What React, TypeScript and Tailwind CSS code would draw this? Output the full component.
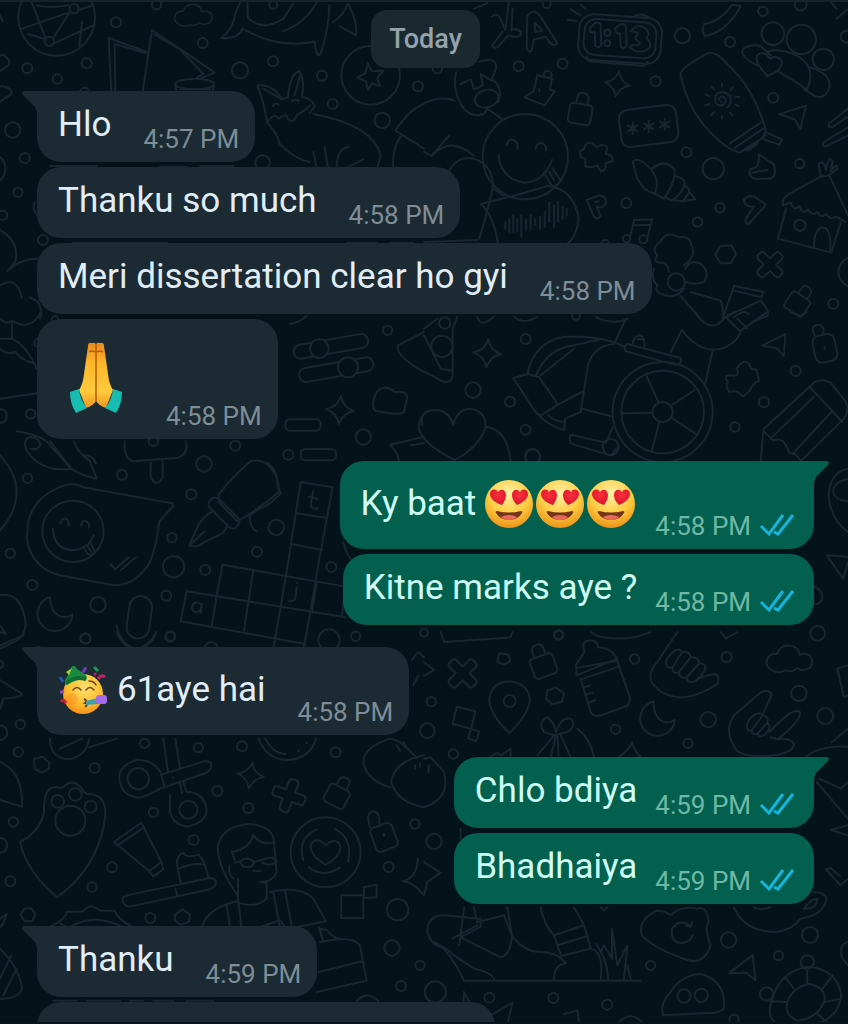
import React from 'react';

type Dot = [number, number, number];

interface PlacedProps {
  x: number;
  y: number;
  turn?: number;
  size?: number;
}

const place = ({ x, y, turn = 0, size = 1 }: PlacedProps) =>
  `translate(${x} ${y}) rotate(${turn}) scale(${size})`;

const Dots: React.FC<{ dots: Dot[] }> = ({ dots }) => (
  <>
    {dots.map(([x, y, r]) => (
      <circle key={`${x}-${y}`} cx={x} cy={y} r={r} />
    ))}
  </>
);

const Sparkle: React.FC<PlacedProps> = (props) => (
  <path transform={place(props)} d="M0-42Q7-10 42 0Q10 8 0 42Q-8 10-42 0Q-8-8 0-42Z" />
);

const Cross: React.FC<PlacedProps> = (props) => (
  <path
    transform={place(props)}
    d="M-14-14V-38Q-14-48-4-48H4Q14-48 14-38V-14H38Q48-14 48-4V4Q48 14 38 14H14V38Q14 48 4 48H-4Q-14 48-14 38V14H-38Q-48 14-48 4V-4Q-48-14-38-14Z"
  />
);

const Padlock: React.FC<PlacedProps> = (props) => (
  <g transform={place(props)}>
    <rect x="-34" y="-22" width="68" height="60" rx="10" />
    <path d="M-17-22V-38Q-17-56 0-56Q17-56 17-38V-22" />
  </g>
);

const Moon: React.FC<PlacedProps> = (props) => (
  <path transform={place(props)} d="M-8-52A52 52 0 1 0 52 8Q40 16 22 12Q-10 2-8-52Z" />
);

const Arrow: React.FC<PlacedProps> = (props) => (
  <path transform={place(props)} d="M-44-8L40-34L22 38L4 8Z" />
);

const Cloud: React.FC<PlacedProps> = (props) => (
  <path
    transform={place(props)}
    d="M-50 30Q-76 16-64-8Q-54-24-36-20Q-26-48 2-46Q30-44 34-18Q62-28 72-4Q76 26 46 28Q34 30 26 22Q10 38-10 30Q-30 42-50 30Z"
  />
);

const Smiley: React.FC<PlacedProps> = (props) => (
  <g transform={place(props)}>
    <circle r="92" />
    <path d="M-38-24Q-34-42-22-38Q-12-34-14-18M24-18Q28-36 40-30Q50-26 48-12" />
    <path d="M-60-8Q-58 52-4 56Q44 58 62 12" />
    <path d="M30 46L44 68Q58 76 66 62L52 36M42 42L54 62" />
  </g>
);

const DOTS_TOP_LEFT: Dot[] = [
  [348, 61, 15], [608, 123, 15], [260, 184, 15], [82, 199, 15], [172, 231, 14], [720, 205, 24],
  [819, 178, 15], [966, 221, 15], [998, 306, 15], [1147, 355, 23], [1254, 253, 15], [38, 384, 23],
  [74, 468, 15], [54, 571, 14], [788, 482, 22], [129, 714, 15], [470, 8, 14], [820, 8, 12],
  [254, 272, 15], [8, 640, 14], [-30, 500, 46],
];

const DOTS_TOP_RIGHT: Dot[] = [
  [284, 193, 15], [416, 185, 15], [695, 238, 15], [775, 101, 23], [918, 120, 15], [1017, 28, 14],
  [1130, 8, 18], [1047, 95, 34], [1132, 112, 44], [1198, 172, 32], [1048, 287, 15], [1268, 104, 18],
  [787, 451, 15], [868, 500, 32], [1127, 485, 14], [607, 603, 15], [888, 617, 14], [821, 660, 14],
  [1228, 905, 15], [544, 726, 12], [1290, 810, 46], [368, 6, 12], [40, 200, 14],
];

const DOTS_MID_LEFT: Dot[] = [
  [1163, 55, 14], [1090, 375, 23], [865, 428, 15], [706, 401, 15], [612, 456, 23], [366, 488, 15],
  [83, 499, 14], [574, 547, 15], [516, 677, 14], [829, 646, 23], [771, 719, 15], [616, 774, 15],
  [521, 764, 32], [499, 851, 15], [97, 819, 15], [31, 724, 14], [294, 878, 23], [256, 980, 15],
  [511, 974, 15], [634, 1010, 20], [987, 984, 32], [1067, 973, 14], [994, 765, 15], [0, 312, 21],
  [92, 306, 14], [115, 92, 12], [460, 388, 14], [165, 22, 10],
];

const DOTS_MID_RIGHT: Dot[] = [
  [305, 81, 15], [147, 234, 23], [258, 269, 15], [305, 353, 15], [326, 434, 23], [933, 345, 14],
  [1020, 271, 15], [1115, 177, 15], [62, 33, 17], [54, 103, 32], [456, 12, 12],
];

const DOTS_LOW_LEFT: Dot[] = [
  [257, 19, 15], [511, 12, 14], [61, 277, 14], [55, 360, 14],
  [284, 408, 15], [434, 334, 14], [595, 347, 14], [726, 343, 15], [1007, 361, 15], [652, 477, 15],
  [460, 541, 14], [745, 528, 15], [581, 624, 15], [336, 706, 15], [276, 765, 14], [31, 748, 15],
  [40, 570, 14], [0, 640, 22], [0, 302, 22], [451, 858, 15], [1166, 705, 15], [1245, 576, 14],
  [1193, 833, 32], [1176, 948, 23], [1203, 1062, 15], [1260, 1000, 14],
];

const DOTS_LOW_RIGHT: Dot[] = [
  [22, 209, 14], [10, 296, 22], [88, 366, 14], [632, 81, 14], [575, 292, 14], [792, 334, 14],
  [853, 263, 23], [908, 75, 15], [1125, 184, 23], [1204, 252, 24], [404, 10, 13], [1181, 4, 22],
  [30, 628, 23], [914, 924, 23], [1158, 909, 24], [1064, 971, 14], [680, 1000, 14], [34, 1080, 32],
  [196, 1097, 15], [388, 1098, 15], [550, 1118, 15], [930, 1162, 14], [1150, 990, 20], [1028, 1086, 20],
];

const Wallpaper: React.FC = () => (
  <svg
    aria-hidden="true"
    viewBox="0 0 848 1024"
    preserveAspectRatio="xMidYMin slice"
    className="absolute inset-0 h-full w-full"
    fill="none"
    stroke="#18272f"
    strokeWidth="6"
    strokeLinecap="round"
    strokeLinejoin="round"
  >
    {/* ball, cards, whale, fox */}
    <g transform="scale(.3333)">
      <Dots dots={DOTS_TOP_LEFT} />
      <circle cx="170" cy="46" r="115" />
      <path d="M95 0L136 108M160 108L208 32M236 24L280 10M60 82L206 32M84 96L136 112M162 124L280 70M246 60L238 130M110 10Q150 20 205 10" />
      <circle cx="148" cy="118" r="14" />
      <circle cx="222" cy="20" r="14" />
      <path d="M334 270L326 108L442 150M346 270L344 126L440 154M428 270L456 84L548 146L644 212L600 230M464 98L540 142L610 216L590 226" />
      <ellipse cx="584" cy="246" rx="58" ry="16" />
      <path d="M526 246L530 272M642 246L638 272M540 262H630" />
      <Cloud x={578} y={44} size={0.8} />
      <path d="M664 108Q700 82 708 28L722 0M742 0L744 48Q790 90 850 50L880 4M664 108Q716 112 728 80Q800 120 860 124Q910 128 944 118M850 88Q920 60 950 0M944 118Q946 160 960 160Q986 90 988 10M1000 60Q1030 40 1044 4Q1074 60 1068 100L1018 72" />
      <path d="M-30 170L10 158Q36 176 24 190L-20 222M-30 270L6 252Q38 258 34 276L-10 306M0 40L8 58" />
      <path d="M802 362Q792 300 772 250Q820 246 846 292Q862 288 864 286Q870 214 898 208Q916 240 906 284Q938 290 944 312L930 334M846 292L790 260M900 222L884 280M802 362Q820 330 836 350Q860 330 864 350Q880 368 892 338Q910 330 930 310" />
      <path d="M818 312Q826 300 836 308M876 298Q888 288 896 298M802 362Q836 400 838 424Q880 470 930 480M940 336Q1120 370 1142 460L1132 498M940 450L950 498M974 436L984 498M1010 498Q1010 440 1046 434M1040 498L1090 472" />
      <circle cx="1112" cy="220" r="88" />
      <path d="M1104 184L1116 208L1150 206L1132 228L1140 252L1116 244L1104 264L1098 238L1072 226L1096 214Z" />
      <path d="M1186 386Q1230 320 1272 306M1186 386L1272 440M1180 498Q1176 440 1202 404M0 684Q60 720 46 780L24 806Q60 770 112 770M0 850Q50 820 66 888M90 886L114 900Q130 930 120 950" />
      <path d="M150 492H290M480 494H560M600 492H700M220 722H500M660 726H730M1040 722H1130M1170 722H1240M104 600Q96 620 110 640" />
    </g>

    {/* clock, sunscreen, shell, hut */}
    <g transform="translate(424 0) scale(.3333)">
      <Dots dots={DOTS_TOP_RIGHT} />
      <path d="M204 44Q220 28 230 52L244 84Q250 40 254 0M204 132L236 88M204 132Q216 144 228 128L252 100Q290 112 292 92Q280 76 262 84L266 20M150 20L190 4" />
      <path d="M308 140L310 40Q330 20 346 38L400 124Q390 136 376 120L366 104L330 112L324 142Q316 156 308 140ZM332 62L334 90L356 86Z" />
      <rect x="464" y="42" width="248" height="138" rx="44" transform="rotate(4 588 111)" />
      <rect x="480" y="56" width="216" height="108" rx="34" transform="rotate(4 588 111)" />
      <path d="M488 164L494 178L660 192L672 180M630 44Q650 30 678 48M432 54L458 56M440 22L470 40M470 8L484 20" />
      <path d="M498 78L514 62Q530 60 530 70L532 128Q524 142 514 130L512 90Q494 96 498 78ZM574 78L590 66Q606 64 606 76L608 132Q598 144 590 134L588 94Q572 98 574 78ZM620 88Q640 60 668 82Q678 96 668 108Q690 130 668 144Q640 158 618 136Q622 126 640 130Q656 124 640 116Q626 108 640 100Q644 88 620 88Z" />
      <circle cx="550" cy="92" r="9" />
      <circle cx="550" cy="124" r="9" />
      <path d="M840 66Q890 60 924 8L950 12Q910 90 842 102Q832 86 840 66M1238 50L1272 20M1220 0L1238 20" />
      <path d="M1000 190Q940 160 960 138Q990 124 1012 134L1040 160M1032 148Q1080 136 1130 168Q1176 200 1150 262L1060 206M1160 196Q1230 220 1214 262Q1200 296 1170 280L1140 262M1030 222Q990 180 1000 160Q1020 142 1038 170Q1060 156 1074 178Q1076 206 1030 222Z" />
      <path d="M770 222Q762 200 856 152Q880 150 910 186Q990 260 1024 380Q1030 412 948 452Q900 440 840 370Q790 310 770 222ZM918 424L1010 362M932 438L1020 378M956 446L1026 400M1024 390L1074 412L1066 428L1014 410M1000 426L970 446" />
      <path d="M892 300Q880 292 890 284Q904 282 906 296Q900 316 880 308Q866 292 880 274Q900 264 918 282Q926 306 908 318M894 244V252M926 256L920 264M946 284L934 286M944 312L934 308M926 340L918 332M894 350V342M862 340L870 330M844 310L856 306M846 278L856 282M862 254L870 262" />
      <path d="M96 210Q84 260 112 310Q140 350 180 336L190 320L236 352M0 304Q50 280 92 296M164 180Q220 160 216 200L204 230Q240 260 222 300M110 246L140 232L150 262L176 250L170 216L204 236" />
      <ellipse cx="188" cy="290" rx="36" ry="26" transform="rotate(-14 188 290)" />
      <path d="M360 224Q356 206 374 206Q388 214 380 230M340 220L384 230L378 262L392 268L362 310L302 286L330 266ZM346 262V268" />
      <Padlock x={470} y={328} turn={10} />
      <Sparkle x={580} y={246} turn={8} size={0.9} />
      <circle cx="304" cy="464" r="128" />
      <path d="M248 430Q254 408 268 414Q284 420 280 440M334 440Q342 416 356 424Q368 430 366 446M224 460Q230 530 300 542Q360 540 384 474M360 512L382 550Q400 556 410 536L386 500M376 510L390 534" />
      <path d="M0 450L22 462L74 402M22 462Q80 400 150 462M74 510Q100 460 150 470Q210 490 206 560L240 580M206 560L184 650L166 710M0 720L160 714" />
      <path d="M170 606Q280 580 370 552Q450 560 464 650Q460 700 430 726M170 606Q210 640 222 726" />
      <path d="M244 660V680M256 650V690M268 640V690M280 652V688M292 640V704M306 654V686M320 640V680M334 650V670M348 644V680M362 630V674M376 600V660M390 610V676M402 600V660M416 616V650M428 620V640" />
      <Arrow x={1108} y={344} size={0.96} />
      <path d="M1272 320L1216 364Q1210 380 1228 374L1272 344M1272 376L1200 420Q1190 436 1210 432L1272 400" />
      <rect x="588" y="316" width="172" height="112" rx="26" transform="rotate(-7 674 372)" />
      <path d="M626 362V396M612 370L640 388M640 370L612 388M674 356V390M660 364L688 382M688 364L660 382M722 350V384M708 358L736 376M736 358L708 376" />
      <path d="M480 440Q486 416 504 424L520 436Q536 420 550 436L546 456Q570 460 566 478L544 484Q548 508 530 508L520 490Q500 500 484 492L484 470Q464 468 468 448Z" />
      <path d="M626 480Q640 460 680 500Q710 540 692 574Q660 570 640 530ZM684 500Q720 470 750 500Q760 530 720 590L692 574M752 522Q790 530 780 552Q770 580 742 596L722 584M782 550Q800 560 794 574L776 598L744 594M796 570L814 592L776 598" />
      <path d="M1004 456L1050 488Q1060 520 1040 530H990Q970 520 980 500Q1010 500 1004 456ZM984 512L1030 504" />
      <path d="M488 594L528 580Q552 586 544 606Q534 620 518 614L530 642Q520 656 510 644L488 594ZM514 600L524 598M960 592Q980 574 1000 590L1024 606Q1024 616 1010 626L974 666Q960 662 966 650L990 614Q960 616 960 592Z" />
      <path d="M618 708L630 654L684 652L670 710M632 670L680 668" />
      <circle cx="608" cy="710" r="11" />
      <circle cx="658" cy="712" r="12" />
      <path d="M1078 610Q1070 590 1098 574L1190 524L1216 520L1272 640M1078 610L1100 602Q1110 630 1126 612Q1136 640 1152 622Q1164 644 1180 630Q1190 650 1206 636Q1220 656 1236 644L1264 660M1086 620L1062 710L1222 752L1250 662M1170 736Q1170 680 1196 676Q1224 680 1218 746M1190 520L1184 486Q1200 470 1206 506Q1214 456 1226 478L1220 508Q1240 480 1240 500L1216 520" />
      <circle cx="1128" cy="670" r="17" />
      <path d="M700 760Q680 740 708 720Q730 684 764 706Q800 700 802 730Q820 760 780 790M700 760Q684 780 710 782Q730 780 736 810M784 800Q800 770 830 786Q860 810 840 840Q810 850 786 840M690 800Q680 830 700 850Q690 870 720 880Q760 890 780 860" />
      <circle cx="757" cy="840" r="26" />
      <path d="M890 732L922 730L936 756L920 784L890 784L874 758Z" />
      <Cross x={1038} y={788} turn={45} size={0.95} />
      <path d="M770 882L830 950M800 870L890 896Q900 920 896 950M896 950L930 852L1018 870L1012 886L930 866M910 940L960 920L1010 896Q1040 930 1030 942L990 958M930 946Q960 920 974 936" />
      <Padlock x={1124} y={900} turn={34} size={0.95} />
    </g>

    {/* sliders, speech bubble, pen, crossword */}
    <g transform="translate(0 310) scale(.3333)">
      <Dots dots={DOTS_MID_LEFT} />
      <path d="M0 20Q20 40 36 26L36 80Q80 100 110 170M0 110Q20 130 46 120Q70 150 100 152M36 26Q90 60 124 0M0 260L112 244M0 80L36 80" />
      <rect x="880" y="82" width="226" height="42" rx="21" transform="rotate(-10 993 103)" />
      <circle cx="958" cy="110" r="28" fill="#04121a" />
      <rect x="896" y="152" width="226" height="42" rx="21" transform="rotate(-10 1009 173)" />
      <circle cx="1044" cy="166" r="30" fill="#04121a" />
      <path d="M1272 60L1194 100Q1184 130 1272 180M870 36Q900 30 920 12" />
      <path d="M1130 240Q1156 214 1184 240Q1220 236 1222 256L1212 300Q1200 312 1126 296Q1110 280 1130 240Z" />
      <Sparkle x={1020} y={294} turn={4} />
      <rect x="856" y="322" width="106" height="34" rx="14" />
      <rect x="902" y="411" width="106" height="34" rx="14" />
      <path d="M1196 450Q1200 430 1170 398L1272 374M1266 340V320M374 388Q370 440 400 448L530 438Q566 430 558 388M452 452V496Q470 530 488 496V448" />
      <path d="M50 358L90 366Q140 380 150 400L214 470Q140 480 100 440Q60 400 84 376Q110 370 122 396Q116 416 92 410M222 388Q230 420 270 448L290 500Q240 490 214 470L150 388M250 430Q280 430 288 454" />
      <path d="M200 518Q220 512 250 526L516 574L520 582L478 628Q470 700 450 750Q410 820 340 820L180 790Q100 770 82 690Q70 560 200 518Z" />
      <Smiley x={219} y={658} />
      <path d="M332 756L346 772L386 736M362 774L408 736" />
      <path d="M0 430Q100 540 0 656" />
      <path d="M656 548Q700 490 752 448Q780 440 800 456Q840 490 836 540Q780 590 712 628L656 570ZM786 450Q820 452 832 500Q830 520 842 544Q810 580 780 590L748 610Q750 650 770 658" />
      <rect x="616" y="584" width="112" height="38" rx="16" transform="rotate(45 672 603)" />
      <path d="M640 596Q600 620 590 650L568 700Q590 710 610 692L668 664L684 640M570 700L614 658" />
      <path d="M902 510L998 526L960 730L912 1010M902 510L860 780L820 1010M888 604L982 618M874 696L966 714M668 758L1036 824L1026 914L560 838L542 928L916 996M668 758L650 850L636 940M760 776L732 956M950 810L936 902M560 838L1036 916" />
      <path d="M940 536L932 580Q936 594 954 588M926 554L952 560M890 826L886 860Q880 872 866 866M604 876Q580 864 576 886Q580 908 600 896L606 876L602 902M892 812V814" />
      <Moon x={164} y={906} turn={-8} />
      <rect x="384" y="852" width="68" height="128" rx="34" transform="rotate(8 418 916)" />
      <path d="M350 940Q360 1000 410 1010Q450 1000 468 962M0 850Q50 840 70 900Q90 960 50 986L0 1010M0 940L18 966L0 960M1030 690Q1040 730 1060 750M100 1010Q115 1000 130 1010" />
    </g>

    {/* wheelchair, heart, pencil */}
    <g transform="translate(424 310) scale(.3333)">
      <Dots dots={DOTS_MID_RIGHT} />
      <path d="M0 50L40 20M100 14L86 50V190Q84 216 56 208L0 178M0 70L50 170L86 176M160 14Q170 50 210 14M270 14Q300 40 340 14" />
      <Sparkle x={190} y={124} turn={4} />
      <path d="M92 444Q0 400-16 350Q-12 296 30 294Q70 290 88 338Q100 290 140 290Q190 300 184 350Q160 410 92 444ZM184 344Q250 350 260 448M-40 400L0 394" />
      <path d="M310 186Q330 90 420 74H470Q560 80 600 104M336 190Q370 110 450 100L530 82M310 186L268 198L336 302Q370 340 420 354L424 320L470 300L492 160Q510 100 570 96M310 186L346 196L402 278M350 190L450 110M346 196L330 190M402 278L474 240M402 278L350 310L336 302M372 308Q390 330 424 330M474 290L560 312M570 96L606 20M516 16Q570 40 612 20" />
      <path d="M610 96L770 138Q776 160 750 158L606 118Q596 104 610 96ZM626 96Q630 70 650 70Q664 80 662 104M640 82H656M740 120L774 54Q830 130 900 108Q940 90 950 60L906 16M812 0Q860 70 900 20L930 0M950 56L1030 0M940 20L970 50M866 116L842 222" />
      <circle cx="716" cy="300" r="150" />
      <circle cx="716" cy="300" r="124" />
      <circle cx="716" cy="300" r="30" />
      <path d="M704 272L668 192M740 282L812 234M744 318L818 368M706 330L684 414M686 302L592 304" />
      <path d="M440 368Q430 390 450 398L560 430L580 408M440 368L546 392L566 346M556 380Q584 380 584 408Q580 430 556 430Q536 420 536 400Q540 386 556 380" />
      <path d="M938 170Q956 140 974 154Q980 176 996 172L1006 206Q984 216 976 238L956 254Q940 232 916 240Q902 222 912 210Q896 190 920 190Q950 196 938 170Z" />
      <Arrow x={1054} y={102} size={0.9} turn={-10} />
      <rect x="1170" y="68" width="66" height="82" rx="20" transform="rotate(-12 1203 109)" />
      <path d="M1172 70Q1156 40 1184 38Q1206 46 1196 64M1202 104V110" />
      <path d="M1020 350L1170 212Q1196 196 1222 214L1266 270Q1276 300 1260 320L1130 448M1160 228L1256 330M1040 380L1170 254M1106 426L1222 300M1010 450L1018 356L1048 386Q1080 370 1096 424Q1116 420 1130 446" />
      <path d="M1100 0L1130 12L1150 0" />
    </g>

    {/* right edge beside the outgoing bubbles */}
    <g transform="translate(330 450) scale(.3333)">
      <path d="M1554 50Q1500 60 1496 130Q1500 200 1554 240M1554 80Q1510 90 1510 120Q1520 150 1554 146M1490 310L1554 314M1490 310L1540 380L1554 330" />
      <path d="M1450 400Q1484 420 1476 440Q1470 460 1450 456" />
      <circle cx="608" cy="14" r="22" />
      <circle cx="282" cy="542" r="12" />
      <circle cx="686" cy="548" r="14" />
    </g>

    {/* scissors, paw, toothbrush, reader */}
    <g transform="translate(0 630) scale(.3333)">
      <Dots dots={DOTS_LOW_LEFT} />
      <path d="M0 40L70 10M350 0Q370 50 410 52Q460 40 468 0M820 50L830 0M910 50L920 0M0 84Q20 96 0 110M0 144L64 184Q70 196 10 200L0 230M1236 84L1254 60L1272 76M1240 160L1256 130" />
      <path d="M150 320Q150 380 210 382Q260 370 268 320M180 350L246 320M268 346L350 320M776 320Q800 384 864 384Q930 380 948 320M796 320Q820 366 858 366M896 354V358M920 330V334" />
      <path d="M102 380L128 374L148 392L146 410L126 422L104 410Z" />
      <path d="M1170 320Q1080 350 1092 400Q1110 450 1172 466M1172 320L1200 330L1250 376M1190 340L1200 356M1210 330L1222 350M1272 370Q1180 390 1174 450Q1190 510 1272 526M1246 400V410M1260 392V404" />
      <circle cx="415" cy="440" r="32" />
      <circle cx="565" cy="533" r="27" />
      <path d="M484 424Q460 382 410 384Q356 400 358 440Q364 490 410 496Q430 500 480 470L616 424Q640 410 632 392Q620 384 600 392L484 428M490 320L504 420M526 320L540 408M510 490V540Q520 580 564 584Q620 570 620 530Q610 480 560 480L550 450M518 436V437M540 450L546 482M484 428L494 466" />
      <Sparkle x={752} y={430} turn={8} size={0.95} />
      <Cross x={867} y={491} turn={20} size={1.05} />
      <Padlock x={1014} y={486} turn={28} size={0.98} />
      <path d="M0 390Q70 420 66 524L0 504" />
      <path d="M60 630Q120 600 132 540Q130 460 170 466Q190 470 196 460Q220 440 246 470Q256 490 270 486Q320 490 316 550Q300 700 172 796Q80 720 60 630Z" />
      <circle cx="173" cy="508" r="19" />
      <circle cx="226" cy="487" r="19" />
      <circle cx="272" cy="524" r="18" />
      <circle cx="211" cy="566" r="45" />
      <path d="M342 630L424 572L484 690L448 718ZM352 640L432 586M448 718L460 734L490 712L484 690" />
      <path d="M368 800Q370 790 390 788L630 738Q650 740 648 756Q640 770 620 774L390 824Q366 820 368 800ZM526 770L532 792M542 752L530 690Q536 664 550 662Q560 680 596 668L612 690L626 738M532 712Q580 690 612 698" />
      <path d="M714 792Q650 700 654 640Q670 580 750 576Q820 584 822 630L816 632Q780 640 760 608Q750 650 696 660L704 684M690 700Q680 720 700 740M704 692L722 688Q740 670 762 690Q760 710 730 704L720 690M762 690L790 682Q820 670 830 690Q810 704 786 692M822 630L830 720Q820 750 780 750L800 754V800Q770 830 714 812V740M760 716L780 718" />
      <path d="M606 886Q620 830 710 808M680 820L690 886M716 812L724 886M820 780L840 886M856 780L876 886M810 780Q900 760 940 800L978 868L890 886M780 886L840 864L856 886M956 886L970 930L960 890L980 894Q1000 920 1020 920L960 930Q1060 910 1080 940L1100 1046L950 1080M956 1020L1088 988" />
      <circle cx="977" cy="661" r="105" />
      <path d="M910 684Q890 620 950 592M1006 592Q1060 620 1044 690M926 706Q970 740 1020 706M977 698Q930 670 932 640Q946 610 978 640Q1010 610 1022 646Q1020 674 977 698Z" />
      <rect x="1118" y="578" width="68" height="76" rx="14" transform="rotate(-20 1152 616)" />
      <path d="M1110 586Q1096 540 1120 538Q1140 540 1138 574M1152 606V612" />
      <path d="M1024 790H1090V858H1024ZM1092 766L1130 758V796L1092 798Z" />
      <path d="M1254 680Q1250 740 1208 748Q1240 750 1272 790M0 860L20 846Q10 880 0 886M0 950Q60 1010 66 1070Q60 1100 0 1100M0 1040L34 970M10 1090L50 1010" />
      <path d="M146 886Q200 860 200 840L250 838Q270 810 300 836H344Q350 860 400 886M210 886Q280 840 370 886M180 874L200 886" />
      <path d="M62 850L72 830L92 828L106 846L98 866L74 868ZM526 848L548 832L570 848L566 870L540 878L524 864Z" />
      <path d="M160 1106H230M260 1106H360M390 1106H430M460 1106H520M560 1106H640M1066 1114Q1080 1090 1104 1090Q1130 1096 1138 1114" />
    </g>

    {/* bottle, hands, shoe, turtle */}
    <g transform="translate(424 630) scale(.3333)">
      <Dots dots={DOTS_LOW_RIGHT} />
      <path d="M50 0L60 30L260 16L266 0M500 0Q540 30 640 14L680 0M0 90L30 114L0 132M890 0L906 20L940 0" />
      <Cross x={116} y={124} turn={45} size={1.05} />
      <path d="M226 64L254 68L258 88L240 98L220 90ZM370 176L396 166L420 184L414 210L384 216L366 200Z" />
      <Padlock x={356} y={94} turn={-20} size={1.05} />
      <path d="M256 304Q200 250 196 206Q200 150 256 148Q316 156 318 206Q310 250 256 304Z" />
      <circle cx="257" cy="207" r="18" />
      <path d="M98 224L154 238L142 290L86 276ZM142 290L166 300L156 328L132 318Z" />
      <path d="M456 98L482 60Q470 30 492 26Q520 22 522 46Q560 46 580 80L458 130ZM456 108L580 86L586 104L470 142M470 142L500 240Q510 256 530 250L610 222Q620 210 616 190L584 100M480 166L500 160M488 188L506 182M496 212L514 204" />
      <path d="M760 0L700 90Q664 130 690 160Q720 196 780 196Q830 190 880 156Q890 130 870 126Q850 130 822 140" />
      <path d="M728 100Q720 84 744 62Q764 44 774 60Q796 56 800 76Q824 74 826 94Q850 96 842 116Q820 150 806 150Q790 152 788 136Q768 142 764 122Q744 126 746 106Q732 110 728 100M746 106L774 60M764 122L800 76M788 136L826 94" />
      <path d="M940 358Q896 300 930 250L1012 180Q1040 170 1042 190L1018 244M940 358Q980 380 1050 370Q1110 360 1110 336Q1104 318 1060 322L1040 316M1060 322Q1130 270 1128 240Q1110 226 1060 276L1036 300" />
      <path d="M970 290Q966 272 984 254Q1006 236 1016 250Q1036 254 1030 272Q1044 284 1030 300Q1010 322 1000 306Q982 310 984 294Q972 300 970 290M984 294L1016 250M1000 306L1030 272" />
      <Moon x={700} y={260} turn={-4} />
      <Cloud x={1094} y={86} size={0.98} />
      <path d="M1240 110L1272 100M1240 110L1260 196L1272 190M1140 380Q1180 340 1272 344M1224 330L1272 290" />
      <path d="M390 310L360 300Q340 270 370 256Q390 270 396 300Q410 256 440 260Q460 280 430 300ZM390 310L340 370M396 310L380 376M410 310L440 376M400 310L404 370M460 290Q500 320 510 376M200 376Q220 356 230 370L260 350V376M580 380Q620 350 624 330Q630 360 656 380M0 380L20 376L60 420Q80 500 0 526M14 400V420M1186 440L1250 470L1272 450M1178 450L1272 560M1272 580L1220 594L1272 610" />
      <path d="M110 590V620M0 690L50 722L10 750L0 790M1206 712L1250 760L1272 740M1206 712L1220 708L1248 732" />
      <path d="M120 826L106 940M84 920L160 880M150 826L160 870L240 850L264 910M10 900Q10 850 60 850L170 860V884L110 916M10 900Q20 940 60 950Q100 1000 120 1046H650M110 916L230 976Q260 970 264 910L250 826M264 910Q300 960 350 960Q400 960 426 994Q390 1000 390 1040M30 930Q70 950 90 970L150 1010Q200 1020 210 1040M350 826Q360 880 390 910L480 880L450 826M390 910L400 940L490 912L480 880M400 940L412 972L500 950L490 912M500 950Q540 960 530 1040M516 936Q550 980 552 1040M530 960L540 940L564 980V890L580 1000L610 940L600 1040M610 1000L620 1040" />
      <path d="M690 840Q640 870 654 910Q690 950 790 984Q840 1000 860 940Q840 890 854 870Q850 820 820 830Q770 820 740 850Q710 830 690 840ZM800 884Q770 856 744 890Q740 930 770 934Q800 930 806 910M800 884L804 872M800 884L786 882" />
      <path d="M930 826Q960 900 1060 900Q1110 890 1130 860Q1200 850 1208 800Q1200 780 1170 780M1140 830Q1160 800 1180 800Q1180 830 1140 830M990 826Q1010 836 1040 826" />
      <Arrow x={960} y={1016} turn={-20} size={1.02} />
      <path d="M716 1144Q710 1110 740 1080Q770 1030 830 1026Q890 1040 900 1100V1130Q890 1140 870 1142L716 1150Z" />
      <circle cx="780" cy="1092" r="20" />
      <circle cx="832" cy="1090" r="20" />
      <path d="M1040 1120Q1060 1020 1150 1004Q1240 1010 1252 1090Q1240 1170 1160 1176H1060Q1030 1160 1040 1120ZM1090 1110Q1110 1060 1160 1056Q1210 1070 1200 1110Q1180 1160 1120 1166Q1080 1150 1090 1110ZM1150 1056V1006M1196 1070L1226 1030M1204 1110L1250 1100M1180 1146L1210 1170M1090 1110L1040 1108M1110 1070L1084 1036" />
      <path d="M1272 930Q1240 940 1256 980L1272 1000M120 1080L140 1116M120 1080L118 1114M200 1150L266 1112L250 1176M420 1146L460 1136L466 1176M580 1176Q620 1130 660 1176M530 826L540 836L550 826" />
    </g>
  </svg>
);

const HeartEyes: React.FC = () => (
  <svg role="img" aria-label="😍" viewBox="0 0 51 50" className="h-[50px] w-[51px] shrink-0">
    <defs>
      <radialGradient id="face" cx="50%" cy="28%" r="74%">
        <stop offset="0" stopColor="#fff0a8" />
        <stop offset=".55" stopColor="#fdcf45" />
        <stop offset="1" stopColor="#ec9016" />
      </radialGradient>
      <radialGradient id="heart" cx="50%" cy="35%" r="65%">
        <stop offset="0" stopColor="#f8303a" />
        <stop offset="1" stopColor="#dc1230" />
      </radialGradient>
    </defs>
    <circle cx="25" cy="25" r="24" fill="url(#face)" />
    <g fill="url(#heart)">
      <path d="M18 26C12 24 6 20 6 15C6 10 12 9 14 13C17 9 22 11 22 16C22 20 20 23 18 26Z" />
      <path d="M33 26C30 23 28 20 28 16C28 11 33 9 36 13C38 9 44 10 44 15C44 20 38 24 33 26Z" />
    </g>
    <path d="M13 32Q25 35 37 32Q39 32 38 34Q34 41 25 41Q16 41 12 34Q11 32 13 32Z" fill="#74331a" />
    <path d="M17 38Q20 36 25 36Q30 36 33 38Q30 41 25 41Q20 41 17 38Z" fill="#e8695c" />
  </svg>
);

const PartyFace: React.FC = () => (
  <svg role="img" aria-label="🥳" viewBox="0 0 51 50" className="h-[50px] w-[51px] shrink-0">
    <defs>
      <radialGradient id="party" cx="55%" cy="35%" r="65%">
        <stop offset="0" stopColor="#ffe070" />
        <stop offset=".6" stopColor="#fdc232" />
        <stop offset="1" stopColor="#f59018" />
      </radialGradient>
    </defs>
    <circle cx="25" cy="29" r="20" fill="url(#party)" />
    <circle cx="14" cy="34" r="6" fill="#f98325" opacity=".4" />
    <path d="M7 19Q6 15 9 12L14 1Q17 0 19 4L28 10Q30 14 27 15Q18 14 9 20Z" fill="#198a3f" />
    <path d="M8 16Q17 9 28 12Q29 15 27 16Q17 13 8 20Z" fill="#0e6b34" />
    <path d="M8 7L14 3L11 10Z" fill="#a8cf3c" />
    <path d="M15 25Q19 20 23 25M28 25Q32 20 36 25M31 16Q36 16 38 20" fill="none" stroke="#70401a" strokeWidth="1.500" strokeLinecap="round" />
    <path d="M26 34Q30 36 27 38Q31 39 27 42" fill="none" stroke="#70401a" strokeWidth="2" />
    <path d="M28 36L40 33V39L28 40Z" fill="#3f9fae" />
    <rect x="38" y="30" width="11" height="9" rx="3" fill="#a66bea" />
    <path d="M24 7Q28 6 27 2" fill="none" stroke="#6637bd" strokeWidth="3" />
    <path d="M36 2L40 6" stroke="#15985a" strokeWidth="3" />
    <path d="M40 14Q43 9 47 12" fill="none" stroke="#bd2265" strokeWidth="3" />
    <path d="M2 12L5 17" stroke="#2457b5" strokeWidth="3" />
    <path d="M2 27H6" stroke="#8f4fc5" strokeWidth="3" />
    <path d="M3 37Q5 33 8 38" fill="none" stroke="#c51f3c" strokeWidth="3" />
    <circle cx="37" cy="9" r="1.500" fill="#bd2265" />
  </svg>
);

const FoldedHands: React.FC = () => (
  <svg role="img" aria-label="🙏" viewBox="0 0 76 76" className="h-[76px] w-[76px] shrink-0">
    <defs>
      <linearGradient id="skin" x1="0" y1="0" x2="0" y2="1">
        <stop offset="0" stopColor="#e88a1c" />
        <stop offset=".3" stopColor="#ffb52a" />
        <stop offset=".75" stopColor="#ffca3c" />
        <stop offset="1" stopColor="#f0931f" />
      </linearGradient>
    </defs>
    <path d="M38 4Q36 2 34 3Q30 2 30 6L26 34Q25 44 21 50L28 68Q35 66 38 61Z" fill="url(#skin)" />
    <path d="M38 4Q40 2 42 3Q46 2 46 6L50 34Q51 44 55 50L48 68Q41 66 38 61Z" fill="url(#skin)" />
    <path d="M38 4V62M31 12Q34 10 37 12M39 12Q42 10 45 12" fill="none" stroke="#b45b0b" strokeWidth="1.500" />
    <path d="M12 52L21 49Q22 60 29 68L18 73Q12 64 12 52Z" fill="#16bdb0" />
    <path d="M64 52L55 49Q54 60 47 68L58 73Q64 64 64 52Z" fill="#16bdb0" />
  </svg>
);

const ReadTicks: React.FC = () => (
  <svg
    role="img"
    aria-label="Read"
    viewBox="0 0 36 24"
    className="mb-1 ml-2 h-6 w-9 shrink-0"
    fill="none"
    stroke="#16b4dc"
    strokeWidth="3"
  >
    <path d="M2 13L10 21L24 2M15 19L19 21L34 2" />
  </svg>
);

interface Message {
  body?: React.ReactNode;
  time?: string;
  sent?: boolean;
  tail?: boolean;
  tall?: boolean;
}

const MESSAGES: Message[] = [
  { body: 'Hlo', time: '4:57 PM', tail: true },
  { body: 'Thanku so much', time: '4:58 PM' },
  { body: 'Meri dissertation clear ho gyi', time: '4:58 PM' },
  { body: <FoldedHands />, time: '4:58 PM', tall: true },
  {
    body: (
      <>
        <span className="mr-2">Ky baat</span>
        <HeartEyes />
        <HeartEyes />
        <HeartEyes />
      </>
    ),
    time: '4:58 PM',
    sent: true,
    tail: true,
  },
  { body: 'Kitne marks aye ?', time: '4:58 PM', sent: true },
  {
    body: (
      <>
        <PartyFace />
        <span className="ml-2">61aye hai</span>
      </>
    ),
    time: '4:58 PM',
    tail: true,
  },
  { body: 'Chlo bdiya', time: '4:59 PM', sent: true, tail: true },
  { body: 'Bhadhaiya', time: '4:59 PM', sent: true },
  { body: 'Thanku', time: '4:59 PM', tail: true },
  {},
];

const Bubble: React.FC<Message> = ({ body, time, sent, tail, tall }) => {
  if (!time) {
    return <li className="mt-[5px] h-[71px] w-[458px] max-w-full rounded-3xl bg-[#1b2a33]" />;
  }

  const withEmoji = typeof body !== 'string' && !tall;
  const side = sent
    ? 'self-end bg-[#03604f] pr-[19px] text-[#cffdf3]'
    : 'self-start bg-[#1b2a33] pr-4 text-[#e1edf7]';
  const corner = tail ? (sent ? 'rounded-tr-none' : 'rounded-tl-none') : '';
  const spacing = tail ? 'mt-[22px] first:mt-0' : 'mt-[5px]';
  const line = tall ? 'h-[89px]' : withEmoji ? 'h-[57px]' : 'h-10';

  return (
    <li className={`relative flex items-end rounded-3xl pt-[14px] pb-2 pl-[21px] ${side} ${corner} ${spacing}`}>
      {tail && (
        <svg
          aria-hidden="true"
          viewBox="0 0 17 24"
          className={`absolute top-0 h-6 w-[17px] ${sent ? '-right-[15px] -scale-x-100' : '-left-[15px]'}`}
          fill={sent ? '#03604f' : '#1b2a33'}
        >
          <path d="M17 0H2Q-1 1 1 4L13 16Q15 19 15 24H17Z" />
        </svg>
      )}
      <div className={`mb-[9px] flex items-center text-[35px] leading-10 whitespace-nowrap ${line}`}>{body}</div>
      <time
        className={`text-[26px] leading-[30px] whitespace-nowrap ${sent ? 'ml-[18px] text-[#70b8a5]' : 'ml-8 text-[#7e8d96]'}`}
      >
        {time}
      </time>
      {sent && <ReadTicks />}
    </li>
  );
};

const App: React.FC = () => {
  return (
    <main className="relative h-screen overflow-hidden border-t-2 border-b-2 border-t-[#15232b] border-b-[#08151d] bg-[#04121a] font-[Roboto,sans-serif]">
      <Wallpaper />
      <div className="relative flex flex-col pt-2 pr-[34px] pl-[37px]">
        <h2 className="self-center rounded-2xl bg-[#1a2830] px-[18px] py-[14px] text-[27px] leading-[30px] font-medium text-[#95a3ab]">
          Today
        </h2>
        <ol className="mt-[23px] flex flex-col">
          {MESSAGES.map((message, index) => (
            <Bubble key={index} {...message} />
          ))}
        </ol>
      </div>
    </main>
  );
};

export default App;
